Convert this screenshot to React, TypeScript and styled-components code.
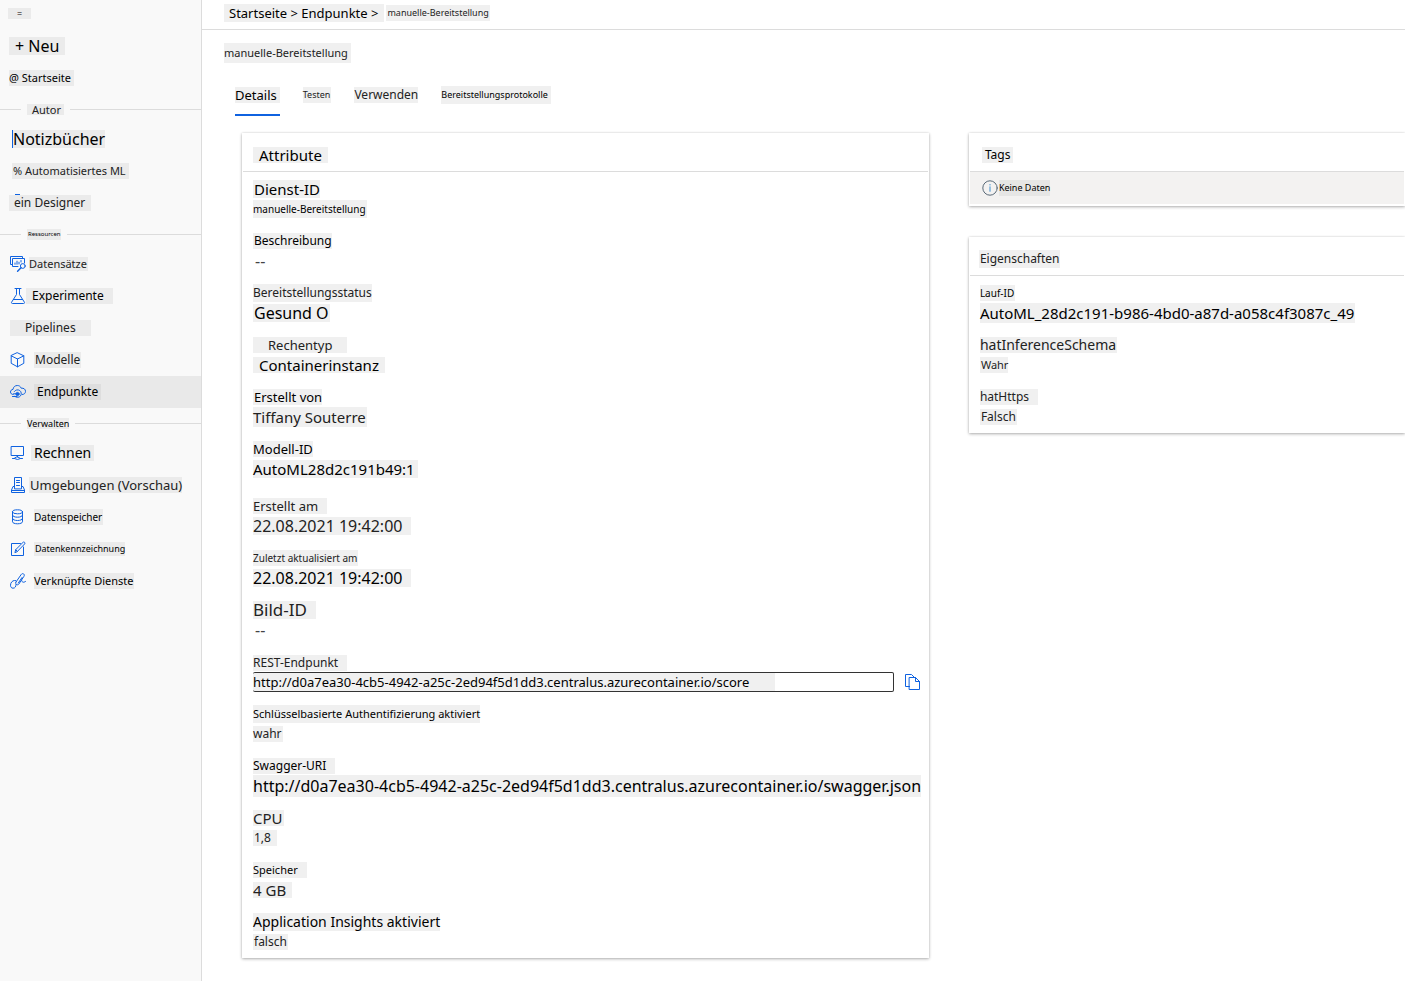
import React from "react";
import styled, { createGlobalStyle, css } from "styled-components";

const color = {
  blue: "#0f62e0",
  line: "#dcdcdc",
  side: "#f9f9f9",
  sideTint: "#ebebeb",
  active: "#e9e9e9",
  activeTint: "#dedede",
  tint: "#f0f0f0",
  text: "#000",
  soft: "#222",
};

const GlobalStyle = createGlobalStyle`
  *, *::before, *::after { box-sizing: border-box; }
  body {
    margin: 0;
    background: #fff;
    color: ${color.text};
    font-family: "Noto Sans", "Open Sans", sans-serif;
    font-size: 12px;
  }
  button, input { font-family: inherit; color: inherit; }
  a { color: inherit; text-decoration: none; }
`;

type TintProps = {
  $size?: number;
  $h?: number;
  $pl?: number;
  $pr?: number;
  $soft?: boolean;
  $bg?: string;
};

const Tint = styled.span<TintProps>`
  display: inline-block;
  flex: none;
  height: ${(p) => p.$h ?? 16}px;
  line-height: ${(p) => p.$h ?? 16}px;
  padding-left: ${(p) => p.$pl ?? 0}px;
  padding-right: ${(p) => p.$pr ?? 0}px;
  font-size: ${(p) => p.$size ?? 12}px;
  font-weight: 400;
  white-space: nowrap;
  color: ${(p) => (p.$soft ? color.soft : color.text)};
  background: ${(p) => p.$bg ?? color.tint};
`;

/* ---------- shell ---------- */

const Page = styled.div`
  display: flex;
  align-items: stretch;
  min-height: 100vh;
`;

const Sidebar = styled.nav`
  flex: 0 0 202px;
  background: ${color.side};
  border-right: 1px solid ${color.line};
`;

const MenuButton = styled.button`
  display: flex;
  align-items: center;
  width: 100%;
  height: 30px;
  padding: 0 0 4px 8px;
  border: 0;
  background: none;
  text-align: left;
`;

const NavItem = styled.a<{ $active?: boolean; $inset?: number; $gap?: number }>`
  display: flex;
  align-items: center;
  gap: ${(p) => p.$gap ?? 8}px;
  height: 32px;
  padding-left: ${(p) => p.$inset ?? 10}px;
  ${(p) => p.$active && css`background: ${color.active};`}
`;

const NotebookTint = styled(Tint)`
  border-left: 1px solid ${color.blue};
`;

const DesignerTint = styled(Tint)`
  position: relative;
  &::before {
    content: "";
    position: absolute;
    top: -1px;
    left: 6px;
    width: 5px;
    height: 1px;
    background: ${color.blue};
  }
`;

const Divider = styled.div`
  display: flex;
  align-items: center;
  gap: 6px;
  height: 29px;
  padding-top: 1px;
  &::before,
  &::after {
    content: "";
    height: 1px;
    background: ${color.line};
  }
  &::before { flex: 0 0 21px; }
  &::after { flex: 1; }
`;

const Main = styled.main`
  flex: 1;
  min-width: 0;
  padding-bottom: 20px;
`;

const TopBar = styled.header`
  display: flex;
  align-items: center;
  gap: 2px;
  height: 30px;
  padding: 0 0 4px 22px;
  border-bottom: 1px solid ${color.line};
`;

const Title = styled.h1`
  display: flex;
  margin: 0;
  padding: 13px 0 0 22px;
`;

const Tabs = styled.div`
  display: flex;
  gap: 23px;
  margin-top: 13px;
  padding-left: 33px;
`;

const Tab = styled.button<{ $active?: boolean }>`
  display: flex;
  align-items: center;
  height: 40px;
  padding: 0;
  border: 0;
  border-bottom: 2px solid ${(p) => (p.$active ? color.blue : "transparent")};
  background: none;
`;

/* ---------- cards ---------- */

const Columns = styled.div`
  display: grid;
  grid-template-columns: minmax(0, 63fr) minmax(0, 40fr);
  align-items: start;
  gap: 40px;
  margin-top: 17px;
  padding-left: 40px;
  overflow-x: clip;
`;

const Stack = styled.div`
  display: flex;
  flex-direction: column;
  gap: 31px;
`;

const Card = styled.section`
  background: #fff;
  box-shadow: 0 1px 3px rgba(0, 0, 0, 0.3), 0 0 2px rgba(0, 0, 0, 0.1);
`;

const CardHead = styled.h2<{ $inset?: number }>`
  display: flex;
  align-items: center;
  height: 39px;
  margin: 0 1px;
  padding: 6px 0 0 ${(p) => p.$inset ?? 10}px;
  border-bottom: 1px solid ${color.line};
`;

const Empty = styled.p`
  display: flex;
  align-items: center;
  gap: 1px;
  height: 32px;
  margin: 0 1px;
  padding-left: 12px;
  background: #f3f2f1;
`;

const EmptyWrap = styled.div`
  padding-bottom: 2px;
`;

const Fields = styled.dl`
  display: flex;
  flex-direction: column;
  gap: 12px;
  margin: 0;
  padding: 7px 8px 6px 11px;
`;

const Field = styled.div<{ $spaced?: boolean }>`
  ${(p) => p.$spaced && css`padding-top: 5px;`}
`;

const Term = styled.dt`
  display: flex;
  align-items: center;
  height: 20px;
`;

const Value = styled.dd`
  display: flex;
  align-items: center;
  gap: 11px;
  height: 20px;
  margin: 0;
`;

const Dashes = styled.span`
  padding-left: 2px;
  line-height: 16px;
  font-size: 16px;
  color: #444;
`;

const UrlInput = styled.input`
  flex: 1;
  min-width: 0;
  height: 20px;
  padding: 0;
  border: 1px solid #333;
  border-left: 0;
  border-radius: 2px;
  outline: 0;
  font-size: 13px;
  background: linear-gradient(${color.tint}, ${color.tint}) 0 0 / 522px 100% no-repeat #fff;
`;

const IconButton = styled.button`
  display: flex;
  padding: 0;
  border: 0;
  background: none;
`;

/* ---------- icons ---------- */

const Glyph = styled.svg`
  flex: none;
  width: 16px;
  height: 16px;
  fill: none;
  stroke: ${color.blue};
  stroke-width: 1;
  stroke-linecap: round;
  stroke-linejoin: round;
`;

const DatasetIcon = () => (
  <Glyph viewBox="0 0 16 16" aria-hidden="true">
    <path d="M2.5 8.5h-2v-8h12v2" />
    <path d="M8 10.5H2.5v-8h12V7" />
    <path d="M5 8.3V7M7 8.3V5.2M9 8V6.2M11 6V4.5" />
    <circle cx="12.8" cy="10" r="2.4" />
    <path d="M11 11.8 7.6 15.3" strokeWidth="1.4" />
  </Glyph>
);

const FlaskIcon = () => (
  <Glyph viewBox="0 0 16 16" aria-hidden="true">
    <path d="M5 .5h6M6.5.5v6L1.6 14.2c-.4.7 0 1.3.7 1.3h11.4c.7 0 1.1-.6.7-1.3L9.5 6.5V.5" />
    <path d="M3.5 11.5h9" />
  </Glyph>
);

const CubeIcon = () => (
  <Glyph viewBox="0 0 16 16" aria-hidden="true">
    <path d="M7.5.8 13.8 3.8v7.500L7.5 14.8 1.2 11.300V3.800z" />
    <path d="M1.2 3.8 7.5 7l6.3-3.2M7.5 7v7.800" />
  </Glyph>
);

const EndpointIcon = () => (
  <Glyph viewBox="0 0 16 16" aria-hidden="true">
    <path d="M3.2 10.5C1.500 10.500.5 9.400.5 8s1-2.500 2.500-2.600C3.300 3 5 1.500 7.300 1.500c1.900 0 3.300 1 3.900 2.700 2.600-.3 4.300 1.100 4.300 3.100 0 1.900-1.300 3.200-3.200 3.200" />
    <path d="M4.300 7.500A3.800 3.800 0 1 1 5 12.500M2.500 12.500H7" />
    <circle cx="7.500" cy="10" r="1.600" fill={color.blue} />
    <path d="M3.500 9.800h3" />
  </Glyph>
);

const MonitorIcon = () => (
  <Glyph viewBox="0 0 16 16" aria-hidden="true">
    <path d="M1.5 1.5h12v9h-12zM7.5 10.5v1.500M7.500 11.800l3 1.700-3 1-3-1zM2.500 13.500h2M10.500 13.500h2" />
  </Glyph>
);

const EnvironmentIcon = () => (
  <Glyph viewBox="0 0 16 16" aria-hidden="true">
    <path d="M4.5 11.5V.5h7v11zM6.5 3.5h3M6.5 5.5h3M6.5 8.5h3" />
    <path d="M4.5 9.5H3L1.5 13v2.500h13V13L13 9.500h-1.500M1.500 13.500h13" />
  </Glyph>
);

const DatabaseIcon = () => (
  <Glyph viewBox="0 0 16 16" aria-hidden="true">
    <ellipse cx="7.5" cy="2.8" rx="5" ry="2" />
    <path d="M2.5 2.8v10c0 1.100 2.200 2 5 2s5-.9 5-2v-10" />
    <path d="M2.5 6.2c0 1.100 2.200 2 5 2s5-.9 5-2M2.500 9.500c0 1.100 2.200 2 5 2s5-.9 5-2" />
  </Glyph>
);

const LabelingIcon = () => (
  <Glyph viewBox="0 0 16 16" aria-hidden="true">
    <path d="M10.5 2.5h-9v12h12V6" />
    <path d="M5 11.3l.7-2.600L13 1.400c.5-.5 1.200-.5 1.600 0 .5.400.5 1.100 0 1.600l-7.200 7.400zM5.700 8.700l1.700 1.700" />
  </Glyph>
);

const LinkedIcon = () => (
  <Glyph viewBox="0 0 16 16" aria-hidden="true">
    <path d="M6 9 11.200 1.500c.6-.9 1.600-1.100 2.400-.6.800.6.900 1.600.3 2.500L8.900 11c-.6.900-1.600 1-2.400.5-.9-.6-1-1.600-.5-2.500z" />
    <path d="M8.300 10 12 4.500" />
    <path d="M5.500 7.500H4.600C2.300 7.500.5 9.800.5 12.200c0 1.800 1 3 2.500 3 2.200 0 3-1.700 3-3.700M11.500 7c.3 2 1.500 3.200 4 1.500" />
  </Glyph>
);

const CopyIcon = () => (
  <Glyph viewBox="0 0 16 16" aria-hidden="true">
    <path d="M4.5 12.5h-4V.5h6l3 3" />
    <path d="M4.5 3.5h6l4 4v8h-10zM10.5 3.5v4h4" />
  </Glyph>
);

const InfoIcon = () => (
  <Glyph viewBox="0 0 16 16" aria-hidden="true">
    <circle cx="8" cy="8" r="7.2" stroke="#5a6a78" />
    <path d="M8 6.8v4.500M8 4.500v.5" stroke="#3a8fd0" />
  </Glyph>
);

/* ---------- data ---------- */

type Txt = { t: string; size: number; h?: number; pl?: number; pr?: number; soft?: boolean };
type Row = { label: Txt; value?: Txt; kind?: "url"; spaced?: boolean };

const attributes: Row[] = [
  { label: { t: "Dienst-ID", size: 15, h: 18, pl: 1 }, value: { t: "manuelle-Bereitstellung", size: 10, h: 18, pr: 1 } },
  { label: { t: "Beschreibung", size: 12, pl: 1 } },
  {
    label: { t: "Bereitstellungsstatus", size: 12, h: 18, soft: true },
    value: { t: "Gesund O", size: 16, h: 18, pl: 1, pr: 1 },
  },
  { label: { t: "Rechentyp", size: 13, pl: 15, pr: 15, soft: true }, value: { t: "Containerinstanz", size: 15, pl: 6, pr: 6 } },
  { label: { t: "Erstellt von", size: 13, pl: 1 }, value: { t: "Tiffany Souterre", size: 15, h: 20, pr: 1, soft: true } },
  { label: { t: "Modell-ID", size: 13 }, value: { t: "AutoML28d2c191b49:1", size: 15, h: 18, pr: 3 } },
  {
    label: { t: "Erstellt am", size: 13, pr: 9, soft: true },
    value: { t: "22.08.2021 19:42:00", size: 16, h: 18, pr: 9, soft: true },
    spaced: true,
  },
  { label: { t: "Zuletzt aktualisiert am", size: 10, pr: 1, soft: true }, value: { t: "22.08.2021 19:42:00", size: 16, h: 18, pr: 9 } },
  { label: { t: "Bild-ID", size: 17, h: 18, pr: 9, soft: true } },
  { label: { t: "REST-Endpunkt", size: 12, pr: 9, soft: true }, kind: "url" },
  { label: { t: "Schlüsselbasierte Authentifizierung aktiviert", size: 11, h: 18 }, value: { t: "wahr", size: 12, pr: 1, soft: true } },
  {
    label: { t: "Swagger-URI", size: 12, pr: 9 },
    value: { t: "http://d0a7ea30-4cb5-4942-a25c-2ed94f5d1dd3.centralus.azurecontainer.io/swagger.json", size: 16, h: 22 },
  },
  { label: { t: "CPU", size: 15, pr: 1, soft: true }, value: { t: "1,8", size: 12, pl: 1, pr: 6, soft: true } },
  { label: { t: "Speicher", size: 11, pr: 9 }, value: { t: "4 GB", size: 15, pr: 6, soft: true } },
  { label: { t: "Application Insights aktiviert", size: 14, h: 18 }, value: { t: "falsch", size: 12, pl: 1, pr: 1, soft: true } },
];

const properties: Row[] = [
  { label: { t: "Lauf-ID", size: 10, pr: 1 }, value: { t: "AutoML_28d2c191-b986-4bd0-a87d-a058c4f3087c_49", size: 15, h: 20, pr: 1 } },
  { label: { t: "hatInferenceSchema", size: 14, pr: 1, soft: true }, value: { t: "Wahr", size: 11, pl: 1, soft: true } },
  { label: { t: "hatHttps", size: 12, pr: 9, soft: true }, value: { t: "Falsch", size: 12, pl: 1, pr: 1, soft: true } },
];

const Text = ({ v }: { v: Txt }) => (
  <Tint $size={v.size} $h={v.h} $pl={v.pl} $pr={v.pr} $soft={v.soft}>
    {v.t}
  </Tint>
);

const EndpointUrl = () => (
  <>
    <UrlInput
      id="rest-endpoint"
      readOnly
      value="http://d0a7ea30-4cb5-4942-a25c-2ed94f5d1dd3.centralus.azurecontainer.io/score"
    />
    <IconButton type="button" aria-label="Kopieren">
      <CopyIcon />
    </IconButton>
  </>
);

const FieldList = ({ rows }: { rows: Row[] }) => (
  <Fields>
    {rows.map((row) => (
      <Field key={row.label.t} $spaced={row.spaced}>
        <Term>
          {row.kind === "url" ? (
            <label htmlFor="rest-endpoint">
              <Text v={row.label} />
            </label>
          ) : (
            <Text v={row.label} />
          )}
        </Term>
        <Value>
          {row.kind === "url" ? <EndpointUrl /> : row.value ? <Text v={row.value} /> : <Dashes>--</Dashes>}
        </Value>
      </Field>
    ))}
  </Fields>
);

type NavEntry = Txt & {
  icon?: React.ReactNode;
  gap?: number;
  active?: boolean;
};

const resources: NavEntry[] = [
  { t: "Datensätze", size: 11, icon: <DatasetIcon />, gap: 3, h: 14, pr: 1, soft: true },
  { t: "Experimente", size: 12, icon: <FlaskIcon />, gap: 0, pl: 6, pr: 9 },
  { t: "Pipelines", size: 12, pl: 15, pr: 15, soft: true },
  { t: "Modelle", size: 12, icon: <CubeIcon />, pl: 1, pr: 1, soft: true },
  { t: "Endpunkte", size: 12, icon: <EndpointIcon />, gap: 8, pl: 3, pr: 3, active: true },
];

const manage: NavEntry[] = [
  { t: "Rechnen", size: 14, icon: <MonitorIcon />, gap: 5, pl: 3, pr: 3 },
  { t: "Umgebungen (Vorschau)", size: 13, icon: <EnvironmentIcon />, gap: 3, pl: 1, soft: true },
  { t: "Datenspeicher", size: 10, icon: <DatabaseIcon />, gap: 8, pr: 1 },
  { t: "Datenkennzeichnung", size: 9, icon: <LabelingIcon />, gap: 8, pl: 1, h: 14 },
  { t: "Verknüpfte Dienste", size: 11, icon: <LinkedIcon />, gap: 8 },
];

const NavList = ({ items }: { items: NavEntry[] }) => (
  <>
    {items.map((i) => (
      <NavItem key={i.t} href="#" $active={i.active} $gap={i.gap} aria-current={i.active ? "page" : undefined}>
        {i.icon}
        <Tint
          $size={i.size}
          $h={i.h}
          $pl={i.pl}
          $pr={i.pr}
          $soft={i.soft}
          $bg={i.active ? color.activeTint : color.sideTint}
        >
          {i.t}
        </Tint>
      </NavItem>
    ))}
  </>
);

export default function App() {
  return (
    <>
      <GlobalStyle />
      <Page>
        <Sidebar>
          <MenuButton type="button" aria-label="Menü">
            <Tint $size={9} $h={11} $pl={9} $pr={9} $bg={color.sideTint}>=</Tint>
          </MenuButton>
          <NavItem href="#" $inset={9}>
            <Tint $size={16} $h={18} $pl={6} $pr={6} $bg={color.sideTint}>+ Neu</Tint>
          </NavItem>
          <NavItem href="#" $inset={9}>
            <Tint $size={11} $pr={3} $bg={color.sideTint}>@ Startseite</Tint>
          </NavItem>
          <Divider>
            <Tint $size={11} $h={11} $pl={5} $pr={3} $soft $bg={color.sideTint}>Autor</Tint>
          </Divider>
          <NavItem href="#" $inset={12}>
            <NotebookTint $size={16} $h={18} $bg={color.sideTint}>Notizbücher</NotebookTint>
          </NavItem>
          <NavItem href="#" $inset={12}>
            <Tint $size={11} $pl={1} $pr={3} $soft $bg={color.sideTint}>% Automatisiertes ML</Tint>
          </NavItem>
          <NavItem href="#" $inset={9}>
            <DesignerTint $size={12} $pl={5} $pr={6} $soft $bg={color.sideTint}>ein Designer</DesignerTint>
          </NavItem>
          <Divider>
            <Tint $size={6} $h={11} $pl={1} $bg={color.sideTint}>Ressourcen</Tint>
          </Divider>
          <NavList items={resources} />
          <Divider>
            <Tint $size={9} $h={11} $bg={color.sideTint}>Verwalten</Tint>
          </Divider>
          <NavList items={manage} />
        </Sidebar>

        <Main>
          <TopBar>
            <Tint as="a" href="#" $size={13} $h={18} $pl={5} $pr={6}>{"Startseite > Endpunkte >"}</Tint>
            <Tint $size={9} $pl={1} $pr={1} $soft>manuelle-Bereitstellung</Tint>
          </TopBar>
          <Title>
            <Tint $size={11} $h={20} $pr={3} $soft>manuelle-Bereitstellung</Tint>
          </Title>
          <Tabs role="tablist">
            <Tab type="button" role="tab" aria-selected="true" $active>
              <Tint $size={13} $pr={3}>Details</Tint>
            </Tab>
            <Tab type="button" role="tab" aria-selected="false">
              <Tint $size={9} $pr={1} $soft>Testen</Tint>
            </Tab>
            <Tab type="button" role="tab" aria-selected="false">
              <Tint $size={12} $soft>Verwenden</Tint>
            </Tab>
            <Tab type="button" role="tab" aria-selected="false">
              <Tint $size={9} $h={18} $pr={3}>Bereitstellungsprotokolle</Tint>
            </Tab>
          </Tabs>

          <Columns>
            <Card>
              <CardHead>
                <Tint $size={15} $pl={6} $pr={6}>Attribute</Tint>
              </CardHead>
              <FieldList rows={attributes} />
            </Card>
            <Stack>
              <Card>
                <CardHead $inset={12}>
                  <Tint $size={12} $pl={3} $pr={3}>Tags</Tint>
                </CardHead>
                <EmptyWrap>
                  <Empty>
                    <InfoIcon />
                    <Tint $size={9} $bg="#e6e6e5">Keine Daten</Tint>
                  </Empty>
                </EmptyWrap>
              </Card>
              <Card>
                <CardHead $inset={9}>
                  <Tint $size={12} $h={18} $pl={1} $soft>Eigenschaften</Tint>
                </CardHead>
                <FieldList rows={properties} />
              </Card>
            </Stack>
          </Columns>
        </Main>
      </Page>
    </>
  );
}
